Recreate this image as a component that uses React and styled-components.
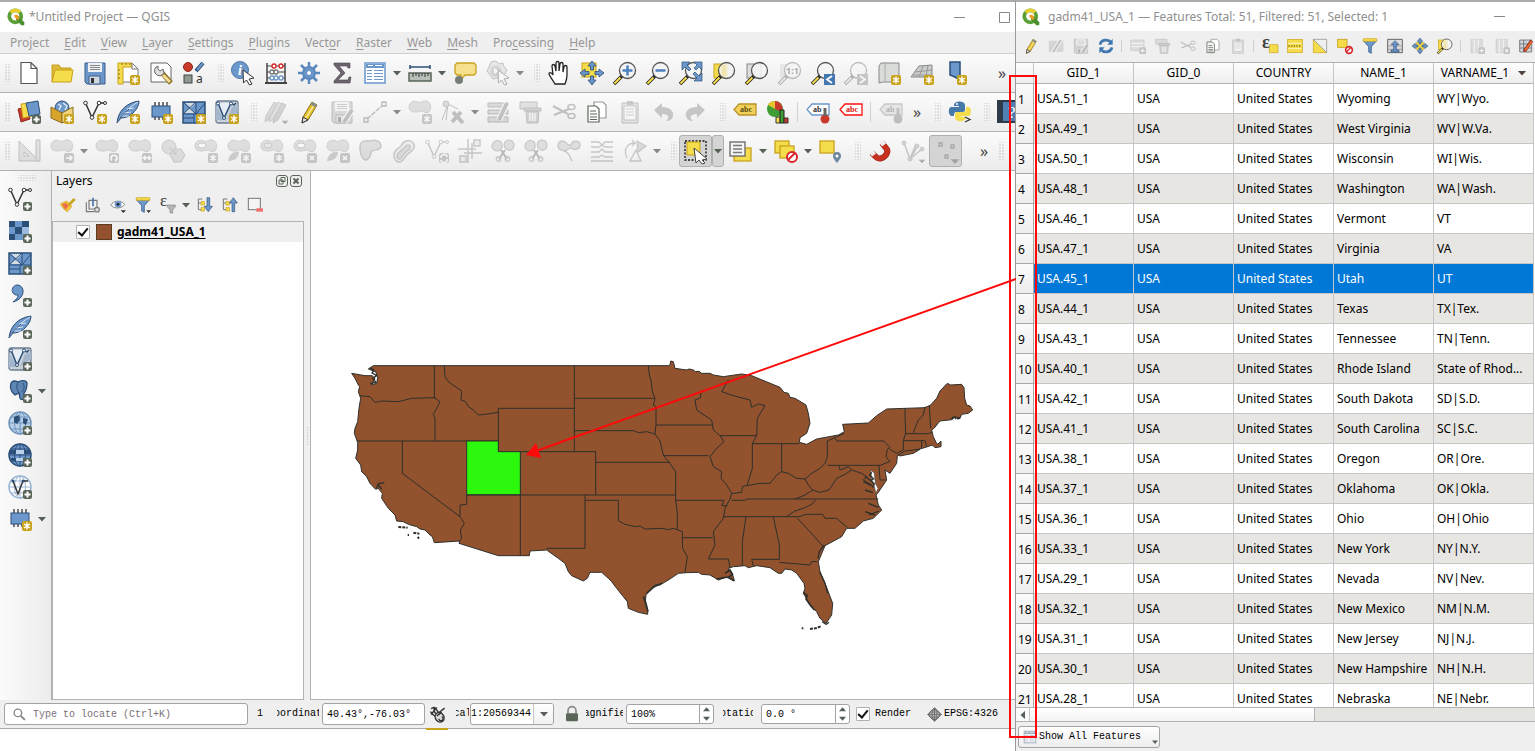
import React, { useState } from "react";
import styled, { createGlobalStyle } from "styled-components";

const GlobalStyle = createGlobalStyle`
  * { box-sizing: border-box; }
  body {
    margin: 0;
    background: #fff;
    color: #000;
    font-family: "Noto Sans", "Open Sans", sans-serif;
    font-size: 12px;
    line-height: 16px;
  }
  button, input, select {
    font: inherit;
    color: inherit;
    margin: 0;
    padding: 0;
    border: 0;
    background: none;
    outline: none;
  }
`;

const Desktop = styled.div`
  display: grid;
  grid-template-columns: minmax(0, 1015fr) minmax(0, 520fr);
  height: 100vh;
  overflow: hidden;
`;

const MainWindow = styled.main`
  display: flex;
  flex-direction: column;
  min-width: 0;
  min-height: 0;
  padding-bottom: 22px;
  border-top: 2px solid #a9aeab;
`;

const TitleBar = styled.header`
  display: flex;
  align-items: center;
  flex: none;
  height: ${(p) => (p.$small ? 29 : 30)}px;
  padding: 0 0 0 ${(p) => (p.$small ? 6 : 7)}px;
  background: #fff;
  color: #8f8f8f;
  font-size: 12px;
  white-space: nowrap;
  h1 {
    flex: 1;
    margin: 0 0 0 4px;
    overflow: hidden;
    font-size: 12px;
    font-weight: 400;
  }
  h2 {
    flex: 1;
    margin: 0 0 0 8px;
    overflow: hidden;
    font-size: 12px;
    font-weight: 400;
  }
`;

const WindowBtn = styled.button`
  display: grid;
  place-items: center;
  flex: none;
  width: ${(p) => p.$w}px;
  height: 28px;
  svg { display: block; }
`;

const MenuBar = styled.nav`
  display: flex;
  align-items: center;
  flex: none;
  gap: 15px;
  height: 22px;
  padding: 0 10px;
  border-bottom: 1px solid #cfcfcf;
  background: #efefef;
  a {
    color: #979797;
    text-decoration: none;
  }
  u { text-underline-offset: 2px; }
`;

const ToolRow = styled.div`
  display: flex;
  align-items: center;
  flex: none;
  height: 39px;
  overflow: hidden;
  border-bottom: 1px solid #b2b2b2;
  background: linear-gradient(#fbfbfb, #ececec);
`;

const Grip = styled.span`
  flex: none;
  width: ${(p) => p.$w || 16}px;
  height: 18px;
  padding: 0 ${(p) => (p.$w === 12 ? "2px 0 4px" : "2px 0 8px")};
  background: radial-gradient(circle, #989898 1px, transparent 1px) center / 3px 3px;
  background-clip: content-box;
`;

const SideGrip = styled.span`
  align-self: flex-start;
  width: 18px;
  height: 6px;
  margin: 4px 0 2px 18px;
  background: radial-gradient(circle, #989898 1px, transparent 1px) center / 3px 3px;
`;

const ToolBtn = styled.button`
  display: grid;
  place-items: center;
  flex: none;
  width: ${(p) => p.$w || 33}px;
  height: ${(p) => (p.$w ? 24 : 32)}px;
  border: 1px solid ${(p) => (p.$pressed ? "#aeb1ae" : "transparent")};
  border-radius: 3px;
  background: ${(p) => (p.$pressed ? "#d3d4d3" : "none")};
  svg { display: block; }
  &:disabled svg { filter: grayscale(1); opacity: 0.36; }
`;

const ArrowBtn = styled(ToolBtn)`
  width: 12px;
  &:disabled svg { opacity: 0.7; }
`;

const Rule = styled.span`
  flex: none;
  width: 1px;
  height: ${(p) => p.$h || 20}px;
  margin: 0 3px;
  background: #cfcfcf;
`;

const More = styled.button`
  flex: none;
  width: 20px;
  margin-left: ${(p) => (p.$push ? "auto" : p.$gap ? "12px" : "0")};
  margin-right: ${(p) => (p.$push ? "3px" : "0")};
  color: #444;
  font-size: 16px;
  line-height: 20px;
`;

const Workspace = styled.div`
  display: flex;
  flex: 1;
  min-height: 0;
  background: #efefef;
`;

const SideBar = styled.div`
  display: flex;
  flex-direction: column;
  flex: none;
  width: 51px;
  background: linear-gradient(90deg, #fbfbfb, #ececec);
`;

const SideItem = styled.div`
  display: flex;
  align-items: center;
  flex: none;
  height: 32px;
  padding-left: 3px;
`;

const LayersPanel = styled.section`
  display: flex;
  flex-direction: column;
  flex: none;
  width: 253px;
  border-left: 1px solid #b2b2b2;
`;

const PanelHead = styled.div`
  display: flex;
  align-items: center;
  gap: 2px;
  height: 20px;
  padding: 0 2px 0 4px;
  h2 {
    flex: 1;
    margin: 0;
    font-size: 12px;
    font-weight: 400;
  }
`;

const PanelBtn = styled.button`
  width: 12px;
  height: 12px;
  svg { display: block; }
`;

const PanelTools = styled.div`
  display: flex;
  align-items: center;
  height: 30px;
  padding: 0 0 2px 3px;
`;

const LayerTree = styled.ul`
  flex: 1;
  margin: 0;
  padding: 0;
  list-style: none;
  border: 1px solid #b2b2b2;
  background: #fff;
`;

const LayerRow = styled.li`
  display: flex;
  align-items: center;
  height: 20px;
  padding-left: 23px;
  background: #efefef;
  label {
    font-weight: 700;
    text-decoration: underline;
    text-underline-offset: 2px;
  }
`;

const Swatch = styled.span`
  width: 16px;
  height: 16px;
  margin: 0 5px 0 6px;
  border: 1px solid #5d3a24;
  background: #91522d;
`;

const Check = styled.input`
  appearance: none;
  display: grid;
  place-items: center;
  flex: none;
  width: 14px;
  height: 14px;
  border: 1px solid #b0b0b0;
  border-radius: 1px;
  background: #fff;
  &:checked::before {
    content: "";
    width: 4px;
    height: 8px;
    margin-bottom: 2px;
    border: solid #111;
    border-width: 0 2px 2px 0;
    transform: rotate(40deg);
  }
`;

const Splitter = styled.span`
  display: grid;
  place-items: center;
  flex: none;
  width: 6px;
  &::before {
    content: "";
    width: 3px;
    height: 18px;
    background: radial-gradient(circle, #b3b3b3 1px, transparent 1px) center / 3px 3px;
  }
`;

const Canvas = styled.div`
  flex: 1;
  min-width: 0;
  border: solid #b2b2b2;
  border-width: 0 0 1px 1px;
  background: #fff;
  svg {
    display: block;
    width: 100%;
    height: 100%;
  }
`;

const StatusBar = styled.footer`
  display: flex;
  align-items: center;
  flex: none;
  height: 29px;
  padding: 0 4px;
  border-bottom: 1px solid #a9a9a9;
  background: #efefef;
  font-family: "Liberation Mono", monospace;
  font-size: 10px;
  white-space: nowrap;
`;

const Field = styled.span`
  display: flex;
  align-items: center;
  flex: none;
  width: ${(p) => p.$w}px;
  height: ${(p) => (p.$short ? 20 : 22)}px;
  border: 1px solid #a3a3a3;
  border-radius: 3px;
  background: #fff;
  overflow: hidden;
  input, select {
    flex: 1;
    min-width: 0;
    height: 100%;
    padding-left: ${(p) => (p.$tight ? 0 : 4)}px;
    appearance: none;
  }
  input::placeholder { color: #7b7078; opacity: 1; }
`;

const LocatorIcon = styled.span`
  display: grid;
  margin: 0 3px 0 8px;
`;

const Clipped = styled.label`
  display: flex;
  justify-content: center;
  flex: none;
  width: ${(p) => p.$w}px;
  margin: 0 ${(p) => p.$right}px 0 ${(p) => p.$left}px;
  overflow: hidden;
`;

const Count = styled.span`
  width: 20px;
  margin-left: 9px;
`;

const DropMark = styled.span`
  display: grid;
  place-items: center;
  width: 20px;
  height: 100%;
  border-left: 1px solid #c4c4c4;
  background: linear-gradient(#fff, #f0f0f0);
`;

const Spin = styled.span`
  display: grid;
  width: 14px;
  height: 100%;
  border-left: 1px solid #a3a3a3;
  button {
    display: grid;
    place-items: center;
  }
`;

const MouseBtn = styled.button`
  display: grid;
  place-items: center;
  flex: none;
  align-self: stretch;
  width: 22px;
  margin: 0 8px 0 1px;
  box-shadow: 0 2px 0 #c9a21c;
`;

const StatusIcon = styled.span`
  display: grid;
  flex: none;
  margin-left: ${(p) => p.$left}px;
`;

const RenderLabel = styled.label`
  display: flex;
  align-items: center;
  flex: none;
  gap: 5px;
  margin-left: 6px;
`;

const Crs = styled.span`
  margin-left: 2px;
`;

const AttributeWindow = styled.aside`
  position: relative;
  display: flex;
  flex-direction: column;
  min-width: 0;
  min-height: 0;
  border-top: 2px solid #a9aeab;
  border-left: 1px solid #999;
  background: #efefef;
`;

const AttributeTools = styled.div`
  display: flex;
  align-items: center;
  flex: none;
  height: 31px;
  padding: 0 0 2px 2px;
  overflow: hidden;
`;

const TableArea = styled.div`
  flex: 1;
  min-height: 0;
  padding-right: 1px;
  overflow: hidden;
  border-top: 1px solid #b2b2b2;
  background: #fff;
`;

const Table = styled.table`
  width: 100%;
  table-layout: fixed;
  border-collapse: separate;
  border-spacing: 0;
  th, td {
    overflow: hidden;
    border: solid #c6c6c6;
    border-width: 0 1px 1px 0;
    white-space: nowrap;
    text-overflow: ellipsis;
  }
  td {
    height: 30px;
    padding: 0 4px 0 3px;
  }
  tr:nth-child(even) td { background: #e7e6e3; }
`;

const HeadCell = styled.th`
  height: 21px;
  padding: 0;
  background: linear-gradient(#fdfdfd, #eeeeee);
  font-weight: 400;
  && { border-bottom-color: #b2b2b2; }
  &:first-child { width: 18px; }
`;

const SortLabel = styled.span`
  display: flex;
  align-items: center;
  justify-content: center;
  gap: 9px;
`;

const RowNumber = styled.th`
  padding: 2px 0 0;
  background: linear-gradient(#fbfbfb, #ededed);
  font-weight: 400;
  text-align: left;
  && {
    padding-left: 2px;
    text-overflow: clip;
    border-right-color: #a9a9a9;
    border-bottom-color: #a9a9a9;
  }
`;

const Row = styled.tr`
  && td {
    ${(p) => p.$selected && "background: #0078d7; color: #fff;"}
  }
`;

const ScrollBar = styled.div`
  display: flex;
  flex: none;
  height: 15px;
  border: solid #b2b2b2;
  border-width: 1px 0;
  background: #e4e4e1;
  button {
    display: grid;
    place-items: center;
    width: 14px;
    border-right: 1px solid #c6c6c6;
    background: #fafafa;
  }
`;

const Thumb = styled.span`
  flex: 0 0 55%;
  border-right: 1px solid #b2b2b2;
  background: linear-gradient(#fff, #f3f3f3);
`;

const FilterBar = styled.div`
  display: flex;
  align-items: center;
  flex: none;
  height: 29px;
  padding-left: 2px;
`;

const FilterBtn = styled.button`
  display: flex;
  align-items: center;
  gap: 2px;
  height: 22px;
  padding: 0 1px 0 4px;
  border: 1px solid #a3a3a3;
  border-radius: 3px;
  background: linear-gradient(#fff, #ededed);
  font-family: "Liberation Mono", monospace;
  font-size: 10px;
  > svg:first-child { filter: grayscale(0.6); opacity: 0.8; }
  > svg:last-child {
    align-self: flex-end;
    margin: 0 0 2px 9px;
  }
`;

const Highlight = styled.span`
  position: absolute;
  top: 73px;
  bottom: 13px;
  left: -7px;
  width: 28px;
  border: 2px solid #ff0a0a;
  pointer-events: none;
`;

const Pointer = styled.svg`
  position: absolute;
  top: 268px;
  right: 100%;
  width: 494px;
  height: 194px;
  pointer-events: none;
`;

/* ---------- icons ---------- */

const B = "#6b97cb";
const N = "#2c4f78";
const Y = "#f5dc4a";
const G = "#c9a21c";
const K = "#5a6658";

const Plus = () => (
  <g>
    <rect x="15" y="15" width="9" height="9" rx="2" fill={K} />
    <path d="M19.500 16.500v6M16.500 19.500h6" stroke="#fff" strokeWidth="2" />
  </g>
);
const Star = ({ c = G }) => (
  <g>
    <rect x="14" y="14" width="10" height="10" rx="2" fill={c} />
    <path d="M19 15.500v7M16 17l6 4M22 17l-6 4" stroke="#fff" strokeWidth="1.500" />
  </g>
);
const Mark = ({ d }) => (
  <g>
    <rect x="14" y="14" width="10" height="10" rx="2" fill="#777" />
    <path d={d} stroke="#fff" strokeWidth="1.700" fill="none" />
  </g>
);
const Blob = ({ f = "#b0b6b0" }) => (
  <path
    d="M1 7c0-5 5-7 9-5 2 1 3 0 6-1 5-1 8 4 6 9-1 3-3 3-6 2-2-2-4 0-8 0S1 11 1 7z"
    fill={f}
    stroke="#888"
  />
);
const Ring = () => (
  <g>
    <Blob />
    <ellipse cx="8" cy="6.500" rx="4" ry="2.500" fill="#fff" stroke="#777" />
  </g>
);
const Corner = () => <path d="M18 21h6l-3 3z" fill="#222" />;
const Lens = ({ children }) => (
  <g>
    <path d="M1 23l8-8" stroke="#222" strokeWidth="3.500" />
    <path d="M1.500 22.500l6-6" stroke={Y} strokeWidth="2" />
    <circle cx="14.500" cy="9.500" r="8" fill="#f4f4f4" fillOpacity=".9" stroke="#555" strokeWidth="1.300" />
    {children}
  </g>
);
const Nodes = ({ c = "#333" }) => (
  <g fill="none" stroke={c} strokeWidth="1.500">
    <path d="M2.500 3L9 17.500 16 3h6" />
    <g fill="#fff" strokeWidth="1">
      <circle cx="2.500" cy="3" r="1.800" />
      <circle cx="9" cy="17.500" r="1.800" />
      <circle cx="16" cy="3" r="1.800" />
      <circle cx="22" cy="3" r="1.500" />
    </g>
  </g>
);
const Feather = () => (
  <g>
    <path d="M1 23C2 12 9 3 23 1c0 5-3 9-6 12-4 4-9 5-12 5z" fill={B} stroke={N} />
    <path d="M1 23C6 14 12 8 22 2M8 13l7-1M11 9l7-1M6 16l7 0" stroke="#dce7f3" fill="none" />
    <path d="M1 23C5 16 9 12 13 9" stroke={N} fill="none" />
  </g>
);
const Chip = () => (
  <g>
    <path d="M6 2v18M10 2v18M14 2v18M18 2v18" stroke="#333" strokeWidth="1.300" />
    <rect x="3" y="6" width="18" height="11" fill={B} stroke={N} />
  </g>
);
const Mesh = () => (
  <g>
    <path d="M1 2h22v21H1z" fill={B} stroke={N} strokeWidth="1.500" />
    <path d="M3 3h11l-5 5zM3 12l5-4 5 5H2z" fill="#d5dce4" />
    <path d="M1 14h22M12 14v9M14 2v12M1 2l13 12M14 2L1 14M23 3L14 14M1 18h11" stroke={N} fill="none" />
  </g>
);
const Mesh2 = () => (
  <g>
    <rect x="1" y="1" width="22" height="22" rx="2" fill="#c9d0d8" stroke="#6e7f92" strokeWidth="1.300" />
    <path d="M3 3l6 15 7-15z" fill="#e6edf5" />
    <path d="M1 5l8 15H1zM23 5l-6 2-5 13 11-8z" fill="#a3b6cc" />
    <path d="M3 3l6 15 7-15 3 2 2-2" fill="none" stroke={N} strokeWidth="1.500" />
    <circle cx="3" cy="3.500" r="1.500" fill="#fff" stroke={N} />
    <circle cx="16" cy="3.500" r="1.500" fill="#fff" stroke={N} />
    <circle cx="9" cy="18" r="1.500" fill="#fff" stroke={N} />
  </g>
);
const Globe = ({ f = B, s = N }) => (
  <g fill="none" stroke={s}>
    <circle cx="12" cy="12" r="11" fill={f} strokeWidth="1.500" />
    <path d="M1 12h22M3 6h18M3 18h18M12 1v22" />
    <ellipse cx="12" cy="12" rx="5.500" ry="11" />
  </g>
);
const Pencil = ({ c = "#e9c231" }) => (
  <g>
    <path d="M6 17L15 2l5 3-9 15-6 3z" fill={c} stroke="#8d6e1c" />
    <path d="M9 18l8-13" stroke="#fff3b0" strokeWidth="1.200" />
    <path d="M15 2l5 3-1.500 2.500-5-3z" fill="#8a8f8a" />
    <path d="M6 17l5 3-6 3z" fill="#ddd" stroke="#333" />
  </g>
);
const Tag = ({ f = "#f1d15a", s = "#b8932a", t = "#5a4a10", txt = "abc" }) => (
  <g>
    <path d="M6 4h17v11H6L1 9.500z" fill={f} stroke={s} strokeWidth="1.300" />
    <text x="7" y="12" fontSize="8" fontWeight="700" fontFamily="Liberation Serif, serif" fill={t}>
      {txt}
    </text>
  </g>
);
const Floppy = ({ c = B }) => (
  <g>
    <path d="M2 2h20v21H4l-2-2z" fill={c} stroke="#3b5f8c" />
    <path d="M5 2h14v9H5z" fill="#eef1f4" />
    <path d="M7 4.500h10M7 6.500h10M7 8.500h10" stroke="#888" />
    <path d="M6 15h11v8H6z" fill="#cfd6de" stroke="#3b5f8c" />
    <path d="M8 17h3v5H8z" fill="#333" />
  </g>
);
const Scissors = () => (
  <g fill="none" stroke="#666" strokeWidth="1.500">
    <path d="M1 6l15 8M2 15l15-6" strokeWidth="2" />
    <ellipse cx="19.500" cy="7" rx="3.500" ry="2.500" />
    <ellipse cx="19.500" cy="16" rx="3.500" ry="2.500" />
  </g>
);
const SplitBlob = () => (
  <g stroke="#777" strokeWidth="1.200">
    <path d="M2 4c3-4 8-3 9 1 1 4-2 7-5 7S-1 8 2 4zM14 3c4-4 9-1 9 3s-3 6-6 5-5-5-3-8z" fill="#b0b6b0" />
    <path d="M8 20l6-9M16 20l-6-9" stroke="#555" strokeWidth="2" />
    <circle cx="7.500" cy="20" r="2.300" fill="none" />
    <circle cx="16.500" cy="20" r="2.300" fill="none" />
  </g>
);
const Trash = () => (
  <g>
    <path d="M1 2h17v7H1z" fill="#bbb" stroke="#666" />
    <path d="M5 8h17v3H5zM7 11h13l-1 12H8z" fill="#999" stroke="#666" />
    <path d="M11 13v8M13.500 13v8M16 13v8" stroke="#fff" strokeWidth="1.300" />
  </g>
);
const Table2 = () => (
  <g>
    <rect x="2" y="2" width="20" height="20" fill="#fff" stroke={B} strokeWidth="1.500" />
    <path d="M3 3h18v4H3z" fill={B} />
    <path d="M5 4.500h5M12 4.500h7" stroke="#fff" />
    <path d="M4 9.500h5M11 9.500h9M4 12.500h5M11 12.500h9M4 15.500h5M11 15.500h9M4 18.500h5M11 18.500h9" stroke={B} />
  </g>
);
const Cursor = () => <path d="M12 9l11 8-5 1 3 5-2.500 1-3-5-3 3z" fill="#fff" stroke="#333" />;
const Sheets = () => (
  <g fill="#fff" stroke={K} strokeWidth="1.200">
    <path d="M9 2h9l3 3v13H9z" stroke="#999" />
    <path d="M3 6h8l3 3v13H3z" />
    <path d="M5 11h6M5 14h7M5 17h7M5 19.500h7" />
  </g>
);
const Cross4 = () => (
  <g>
    <path d="M12 0l4 5h-2.500v4h-3V5H8zM12 24l4-5h-2.500v-4h-3v4H8zM0 12l5-4v2.500h4v3H5V16zM24 12l-5-4v2.500h-4v3h4V16z" fill={B} stroke={N} strokeWidth=".8" />
  </g>
);
const Funnel = () => (
  <g>
    <path d="M2 4h20l-8 9v10l-4-2v-8z" fill={B} stroke={N} />
    <path d="M2 1h20v4H2z" fill={Y} stroke={G} />
  </g>
);
const Arrow3 = ({ up }) => (
  <g>
    <path d="M2 3v16h6M2 9h6M2 3h6" stroke="#777" strokeWidth="1.500" fill="none" />
    <rect x="6" y="7" width="5" height="5" fill={Y} stroke={G} />
    <rect x="6" y="16" width="5" height="5" fill={Y} stroke={G} />
    <path d={up ? "M17 1l6 8h-4v13h-4V9h-4z" : "M17 22l6-8h-4V1h-4v13h-4z"} fill={B} stroke={N} />
  </g>
);
const Pair = ({ x, y }) => <rect x={x} y={y} width="14" height="12" fill={Y} stroke={G} strokeWidth="1.300" />;

const glyphs = {
  logo: (
    <g>
      <circle cx="11" cy="11" r="8" fill="none" stroke="#5a9e36" strokeWidth="5" />
      <path d="M5 6a8 8 0 0 1 12 0" fill="none" stroke="#e8cf2f" strokeWidth="5" />
      <path d="M12 11l4 0 7 8v4h-4l-7-8z" fill="#4a8f2e" />
      <path d="M10 9h4l3 5-3 2-4-4z" fill="#ee9b22" />
    </g>
  ),
  newdoc: <path d="M4 1.500h10l6 6v15H4zM14 1.500v6h6" fill="#fff" stroke="#555" strokeWidth="1.200" />,
  open: (
    <g stroke={G}>
      <path d="M2 21V4h7l2 3h10v4" fill="#dcb73a" />
      <path d="M2 21L5 9h18l-2 12z" fill={Y} />
    </g>
  ),
  save: <Floppy />,
  layout: (
    <g>
      <path d="M3 3h14l5 5v13H3z" fill="#fff" stroke="#777" />
      <path d="M2 2h14v4H7v17H2z" fill={Y} stroke={G} />
      <path d="M6 2v2M10 2v2M14 2v2M2 9h2M2 13h2M2 17h2" stroke="#8d6e1c" />
      <path d="M16 2l6 6h-6z" fill="#fff" stroke="#777" />
      <Star />
    </g>
  ),
  manager: (
    <g>
      <path d="M2 2h16l4 4v15H2z" fill="#fff" stroke="#666" />
      <path d="M13 12l9 10" stroke="#8d6e1c" strokeWidth="5" />
      <path d="M14 14l7 7" stroke="#f0dd96" strokeWidth="3" />
      <path d="M9 5a5 5 0 1 0 6 7l-1-4-3 2-2-2z" fill="#ddd" stroke="#666" />
    </g>
  ),
  style: (
    <g>
      <circle cx="6" cy="6" r="4.500" fill="#c93a2b" stroke="#8a2a1e" />
      <path d="M14 10l7-8" stroke={N} strokeWidth="4" />
      <path d="M15 9l6-7" stroke={B} strokeWidth="2" />
      <rect x="2" y="14" width="8" height="8" fill="#8e9a92" stroke="#444" />
      <text x="14" y="22" fontSize="12" fill="#333">a</text>
    </g>
  ),
  identify: (
    <g>
      <circle cx="9" cy="9" r="8.500" fill={B} stroke="#4b77aa" />
      <text x="7" y="14" fontSize="14" fontWeight="700" fontStyle="italic" fontFamily="Liberation Serif, serif" fill="#fff">i</text>
      <Cursor />
    </g>
  ),
  abacus: (
    <g fill="none" stroke="#444" strokeWidth="1.500">
      <path d="M3 2v20M21 2v20" />
      <path d="M3 5h18M3 11h18M3 17h18" strokeWidth="1" />
      <path d="M1 22h22" strokeWidth="2" />
      <g fill="#fff" strokeWidth="1.300">
        <g stroke="#d22"><circle cx="10" cy="5" r="2" /><circle cx="17" cy="5" r="2" /></g>
        <g stroke="#777"><circle cx="8" cy="11" r="2" /><circle cx="12" cy="11" r="2" /></g>
        <g stroke={B}><circle cx="8" cy="17" r="2" /><circle cx="12" cy="17" r="2" /><circle cx="17" cy="17" r="2" /></g>
      </g>
    </g>
  ),
  gear: (
    <g fill="none" stroke="#5a88bd">
      <path d="M12 1v22M1 12h22M4 4l16 16M20 4L4 20" strokeWidth="2.500" />
      <circle cx="12" cy="12" r="6" fill={B} strokeWidth="2" />
      <circle cx="12" cy="12" r="2.500" fill="#fff" />
    </g>
  ),
  sigma: <path d="M4 2h16v5h-2l-1-2H9l6 7-7 7h10l1-3h2l-1 6H4v-2l7-8-7-8z" fill="#6d6470" stroke="#4c444e" strokeWidth=".6" />,
  table: <Table2 />,
  measure: (
    <g>
      <path d="M2 6h20M2 4v4M22 4v4" stroke={N} strokeWidth="1.500" />
      <path d="M1 12h22v8H1z" fill="#b9c0b9" stroke={K} strokeWidth="1.500" />
      <path d="M5 12v4M8 12v3M11 12v4M14 12v3M17 12v4M20 12v3" stroke="#333" />
    </g>
  ),
  tip: (
    <g>
      <path d="M4 2h17l2 2v8l-2 2H12l-5 6 1-6H4l-2-2V4z" fill="#f6e08e" stroke={G} strokeWidth="1.300" />
      <circle cx="6" cy="19" r="4" fill="#777c77" />
    </g>
  ),
  action: (
    <g>
      <path d="M10 0l3 3 4-1 1 4 3 3-2 4-3 4-5 0-4 1-3-4-3-4 2-4 2-5z" fill="#ccc" stroke="#666" />
      <circle cx="10" cy="10" r="5.500" fill="#999" />
      <path d="M8 7l5 3-5 3z" fill="#fff" />
      <Cursor />
    </g>
  ),
  hand: (
    <path d="M8 23c-2-4-5-7-6-10 0-2 2-2 4 1L5 5c0-2 2.500-2 3 0l1 5V2c0-2 3-2 3 0v8l1-7c0-2 3-2 3 0v8l1-5c0-2 3-2 3 0v8c0 4-1 6-2 9z" fill="#fff" stroke="#222" strokeWidth="1.300" />
  ),
  panSel: (
    <g>
      <rect x="2" y="2" width="14" height="14" fill={Y} stroke={G} />
      <Cross4 />
    </g>
  ),
  panTo: (
    <g>
      <rect x="7" y="7" width="10" height="10" fill={Y} stroke={G} />
      <Cross4 />
    </g>
  ),
  zoomIn: <Lens><path d="M14.500 4.500v10M9.500 9.500h10" stroke="#4b7fbd" strokeWidth="2.500" /></Lens>,
  zoomOut: <Lens><path d="M9.500 9.500h10" stroke="#4b7fbd" strokeWidth="2.500" /></Lens>,
  zoomFull: (
    <g>
      <Lens />
      <path d="M3 1h8l-3 3 4 4-2 2-4-4-3 3zM23 1h-8l3 3-3 3 2 2 3-3 3 3zM23 20h-8l3-3-4-4 2-2 4 4 3-3z" fill={B} stroke={N} strokeWidth=".7" />
    </g>
  ),
  zoomSel: <g><rect x="2" y="3" width="14" height="14" fill={Y} stroke={G} /><Lens><path d="M12 4v11" stroke="#ecd87a" strokeWidth="5" opacity=".5" /></Lens></g>,
  zoomLayer: <g><rect x="2" y="3" width="14" height="14" fill="#ddd" stroke="#888" /><Lens /></g>,
  zoomNative: <g><rect x="2" y="3" width="14" height="14" fill="#ccc" /><Lens><text x="8" y="13" fontSize="9" fontWeight="700" fill="#222">1:1</text></Lens></g>,
  zoomLast: <g><Lens /><path d="M13 13h11v11H13z" fill="#4377b1" /><path d="M21 15l-5 3.500 5 3.500" stroke="#fff" strokeWidth="1.800" fill="none" /></g>,
  zoomNext: <g><Lens /><path d="M13 13h11v11H13z" fill="#777" /><path d="M16 15l5 3.500-5 3.500" stroke="#fff" strokeWidth="1.800" fill="none" /></g>,
  mapView: <g><path d="M4 2h18v19H6L2 22V5z" fill="#d9dcd9" stroke="#888" /><path d="M8 2v18" stroke="#aaa" /><Star /></g>,
  map3d: <g><path d="M1 16L9 5l13-1v12z" fill="#c9cdc9" stroke="#888" /><path d="M5 11l17-2M13 5l-4 11M18 4l-2 12M3 14h19" stroke="#999" /><Star /></g>,
  bookmark: <g><path d="M7 1h10v18l-5-3-5-2z" fill={B} stroke={N} strokeWidth="1.500" /><Star /></g>,

  source: (
    <g>
      <path d="M1 9l9-2 3 12-9 3z" fill="#c93a2b" stroke="#912a1f" />
      <path d="M4 4l10-1 1 13-9 2z" fill={Y} stroke={G} />
      <path d="M9 3l12-2 2 13-11 2z" fill={B} stroke={N} />
      <Plus />
    </g>
  ),
  geopackage: (
    <g>
      <circle cx="12" cy="8" r="7" fill={B} stroke={N} />
      <path d="M8 4l3 2-2 4M13 3l4 3-2 4" stroke="#dce7f3" fill="none" strokeWidth="1.500" />
      <path d="M1 7l11 6v10L1 18z" fill="#d7a52c" stroke="#8d6e1c" />
      <path d="M12 13l11-6v11l-11 5z" fill="#f0d37b" stroke="#8d6e1c" />
      <Star />
    </g>
  ),
  newVector: <g><Nodes /><Star /></g>,
  newFeather: <g><Feather /><Star /></g>,
  newChip: <g><Chip /><Star /></g>,
  newMesh: <g><Mesh /><Star /></g>,
  newMesh2: <g><Mesh2 /><Star /></g>,
  addVector: <g><Nodes /><Plus /></g>,
  addRaster: (
    <g>
      <path d="M1 2h20v19H1z" fill={B} />
      <path d="M1 2h6v6H1zM14 2h7v6h-7zM7 8h7v7H7zM1 15h6v6H1z" fill={N} />
      <path d="M14 8h7v7h-7z" fill="#9dbbe0" />
      <Plus />
    </g>
  ),
  addMesh: <g><Mesh /><Plus /></g>,
  addComma: <g><path d="M9 2c6 0 8 7 4 12-2 3-5 4-8 5 4-3 5-5 5-7-7 1-8-9-1-10z" fill={B} stroke={N} /><Plus /></g>,
  addFeather: <g><Feather /><Plus /></g>,
  addMesh2: <g><Mesh2 /><Plus /></g>,
  postgis: (
    <g>
      <path d="M3 4c2-3 5-2 7-1 3-2 8-2 9 1 0 4-1 8-3 10v5c0 2-4 2-4 0l-1-5-4 2C3 13 2 8 3 4z" fill="#5d86b5" stroke={N} strokeWidth="1.300" />
      <path d="M10 3c-2 4-1 8 1 11M15 4c2 4 1 7-1 9" stroke={N} fill="none" />
      <Plus />
    </g>
  ),
  wms: <g><Globe f="#b8cfe8" s="#6f93ba" /><path d="M6 6l5-2 1 5-3 4-3-2zM15 7l5 1-2 6-3-2z" fill={N} /><Plus /></g>,
  wcs: <g><Globe /><path d="M2 7h20v4H2zM3 15h18v3H3z" fill={N} /><path d="M8 7h8v4H8zM8 15h7v3H8z" fill="#bcd2ea" /><Plus /></g>,
  wfs: <g><Globe f="#fff" s="#9ab5d4" /><path d="M5 6l5 13 5-13h5" stroke="#333" strokeWidth="1.500" fill="none" /><circle cx="5" cy="6" r="1.500" fill={N} /><circle cx="15" cy="6" r="1.500" fill={N} /><Plus /></g>,

  edits: (
    <g stroke="#777">
      <path d="M2 16L10 2l3 2-8 15-4 3z" fill="#aaa" />
      <path d="M6 17l8-15 4 2-8 15-5 3z" fill="#bbb" />
      <path d="M10 18l8-15 4 2-8 15-5 3z" fill="#999" />
      <Corner />
    </g>
  ),
  pencil: <Pencil />,
  saveEdits: <g><Floppy c="#aaa" /><path d="M14 22l8-12" stroke="#fff" strokeWidth="6" /><path d="M14 22l8-12" stroke="#666" strokeWidth="4" /></g>,
  line: <g stroke="#555" strokeWidth="1.300"><path d="M4 19L20 5" strokeDasharray="5 1" /><path d="M1 18h4v4H1zM19 2h4v4h-4z" fill="#eee" /></g>,
  addPoly: <g><Blob /><Star c="#777" /></g>,
  vertex: <g stroke="#666" fill="none"><path d="M4 3l4 3M7 4L1 20M7 4l-2 16M7 4l10 5" /><circle cx="5" cy="4" r="3" fill="#aaa" /><path d="M11 22l9-10M12 12l10 11" strokeWidth="4" /></g>,
  modify: <g><path d="M2 3h20v4H2zM2 10h20v4H2zM2 17h20v5H2z" fill="#aaa" stroke="#555" /><path d="M13 20l8-17" stroke="#fff" strokeWidth="6" /><path d="M13 20l8-17" stroke="#666" strokeWidth="4" /></g>,
  trash: <Trash />,
  cut: <Scissors />,
  copy: <Sheets />,
  paste: <g><path d="M4 3h16v20H4z" fill="#ccc" stroke="#666" /><path d="M6 6h12v14H6z" fill="#fff" stroke="#777" /><path d="M9 1h6v4H9z" fill="#777" /><path d="M8 9h8M8 12h8M8 15h8" stroke="#888" /></g>,
  undo: <path d="M3 10l8-7v4c8 0 12 4 11 9-1 4-4 5-7 5 4-3 3-7-4-7v4z" fill="#777" />,
  redo: <path d="M21 10l-8-7v4C5 7 1 11 2 16c1 4 4 5 7 5-4-3-3-7 4-7v4z" fill="#777" />,
  label: <Tag />,
  diagram: (
    <g>
      <circle cx="9" cy="9" r="8" fill="#3f9c35" />
      <path d="M9 9V1a8 8 0 0 1 7 11z" fill="#c93a2b" />
      <path d="M9 9L2 5a8 8 0 0 1 7-4z" fill="#e9c231" />
      <path d="M10 17h4v6h-4z" fill={Y} stroke="#333" /><path d="M14 10h4v13h-4z" fill="#3f9c35" stroke="#222" /><path d="M18 18h4v5h-4z" fill="#c93a2b" stroke="#333" />
    </g>
  ),
  labelPin: <g><Tag f="#fff" s={B} t="#333" txt="ab" /><circle cx="19" cy="19" r="4.500" fill="#c93a2b" /><path d="M19 8v8" stroke="#666" strokeWidth="3" /></g>,
  labelRed: <Tag f="#fff" s="#f11" t="#d11" />,
  labelGrey: <g><Tag f="#ccc" s="#777" t="#333" txt="ab" /><circle cx="19" cy="19" r="4.500" fill="#666" /><path d="M19 8v8" stroke="#666" strokeWidth="3" /></g>,
  python: (
    <g>
      <path d="M6 5c0-4 10-5 11 0v5c0 2-2 2-4 2H9c-3 0-3 2-3 4H3c-3-2-3-8 0-9h8V6H6z" fill="#4779a8" />
      <path d="M18 7h3c3 2 2 8 0 9h-8v1h5c0 5-10 6-11 1v-4c0-2 2-2 4-2h4c3 0 3-2 3-5z" fill={Y} />
      <circle cx="9" cy="4" r="1" fill="#fff" />
      <path d="M17 17l5 2.500-5 2.500" stroke="#333" fill="none" strokeWidth="1.300" />
    </g>
  ),
  help: (
    <g>
      <rect x="0" y="0" width="24" height="23" fill="#2f3b48" />
      <rect x="6" y="2" width="18" height="19" fill="#4f7fb5" />
      <text x="11" y="18" fontSize="17" fontFamily="Liberation Serif, serif" fill="#fff">?</text>
    </g>
  ),

  ruler: <g fill="#bbb" stroke="#666"><path d="M2 2l20 20H2zM7 13v4h5z" fillRule="evenodd" /><path d="M19 1h4v21h-4z" /></g>,
  blobMove: <g><Blob /><Mark d="M16 19h6M19.500 16.500l2.500 2.500-2.500 2.500" /></g>,
  blobRotate: <g><Blob /><Mark d="M17 21.500a3 3 0 1 1 4 0v-2" /></g>,
  blobScale: <g><Blob /><Mark d="M16 19h6M17.500 17l-2 2 2 2M20.500 17l2 2-2 2" /></g>,
  simplify: <g fill="#b0b6b0" stroke="#777"><circle cx="8" cy="8" r="7" /><path d="M13 10h7l4 6-4 7h-7l-4-7z" /><path d="M8 8l7 7M15 12v3h-3" fill="none" /></g>,
  addRing: <g><Ring /><Star c="#777" /></g>,
  addPart: <g><Blob /><path d="M1 22c1-6 5-10 11-9 0 5-4 9-11 9z" fill="#888" /><Star c="#777" /></g>,
  fillRing: <g><Blob /><ellipse cx="8" cy="6.500" rx="4" ry="2.500" fill="#ccc" stroke="#777" /><Star c="#777" /></g>,
  delRing: <g><Ring /><Mark d="M17 17l4 4M21 17l-4 4" /></g>,
  delPart: <g><Blob /><path d="M1 22c1-6 5-10 11-9 0 5-4 9-11 9z" fill="#888" /><Mark d="M17 17l4 4M21 17l-4 4" /></g>,
  reshape: <path d="M1 8c0-6 5-7 10-6 5-2 11 0 11 5-1 5-6 3-9 5-2 2-1 8-6 9-4 0-6-7-6-13z" fill="#b0b6b0" stroke="#777" strokeWidth="1.500" />,
  offset: <g stroke="#777" strokeWidth="1.500"><path d="M2 16c-1-4 4-6 7-9 2-5 8-7 11-4 5 4 1 9-3 11-4 2-5 9-10 9-3 0-5-3-5-7z" fill="#ddd" /><path d="M5 17c0-3 4-5 7-8 1-3 5-4 6-2 2 3-2 4-4 6-3 2-4 7-6 7s-3-1-3-3z" fill="#aaa" /></g>,
  reverse: <g><Nodes c="#777" /><Mark d="M16 19a3 3 0 0 1 6-1M22 20a3 3 0 0 1-6 1" /></g>,
  trim: <g stroke="#777" fill="none" strokeWidth="1.500"><path d="M10 0v24M14 4v16M0 10h18M6 14h18" /><path d="M16 1h6v6h-6zM2 17h6v6H2z" fill="#ddd" /></g>,
  split: <SplitBlob />,
  merge: <g fill="#b0b6b0" stroke="#777" strokeWidth="1.300"><path d="M1 5c3-5 8-3 10 1h3c1-5 9-5 9 0 0 4-5 6-9 3l-3 1C9 13 0 12 1 5z" /><path d="M7 12c6 1 5 6 8 10" fill="none" /></g>,
  attrs: <path d="M1 3h8l3 3 3-3h8M1 8h8l3-2 3 2h8M1 13h8l3-3 3 3h8M1 18h8l3-2 3 2h8M1 22h22" fill="none" stroke="#777" strokeWidth="1.300" />,
  rotate: <g fill="none" stroke="#777" strokeWidth="1.300"><path d="M4 19C0 11 4 4 12 4l-3-3M12 4L9 7M7 22l6-11 5 11z" /><path d="M14 2l9 5-8 6z" fill="#aaa" /></g>,
  select: (
    <g>
      <rect x="1" y="2" width="21" height="19" fill="none" stroke="#111" strokeWidth="1.300" strokeDasharray="2 1.500" />
      <rect x="3" y="3" width="13" height="13" fill={Y} stroke={G} />
      <path d="M10 9l13 11-5 1 3 3-3 1-3-4-3 3z" fill="#fff" stroke="#444" />
    </g>
  ),
  selectForm: <g><rect x="5" y="9" width="17" height="13" fill={Y} stroke={G} strokeWidth="1.300" /><rect x="1" y="3" width="15" height="14" fill="#f4f4f4" stroke="#666" strokeWidth="1.300" /><path d="M4 6.500h9M4 10h9M4 13.500h9" stroke="#777" strokeWidth="1.500" /></g>,
  deselect: <g><Pair x={1} y={2} /><Pair x={6} y={7} /><circle cx="18" cy="18" r="5" fill="#fff" stroke="#d9252b" strokeWidth="2" /><path d="M14 21l7-7" stroke="#d9252b" strokeWidth="2" /></g>,
  selectLoc: <g><Pair x={1} y={2} /><path d="M18 24c-3-4-4-5-4-7a4 4 0 0 1 8 0c0 2-1 3-4 7z" fill="#6e87a0" /><circle cx="18" cy="17" r="1.500" fill="#fff" /></g>,
  magnet: (
    <g fill="none" strokeWidth="5">
      <path d="M4 14l4 4c5 5 15-4 10-9l-4-5" stroke="#8a2016" strokeWidth="6" />
      <path d="M4 14l4 4c5 5 15-4 10-9l-4-5" stroke="#c9311f" strokeWidth="5" />
      <path d="M3 12l3 4M13 2l3 4" stroke="#eee" />
    </g>
  ),
  snap: <g fill="#999" stroke="#777"><path d="M3 4l6 16 7-12M9 20l12-10M9 20l6-15" fill="none" strokeWidth="1.500" /><circle cx="3" cy="4" r="2" /><circle cx="16" cy="7" r="2" /><circle cx="21" cy="10" r="2" /><circle cx="9" cy="20" r="2" /><Corner /></g>,
  dots: <g fill="none" stroke="#555" strokeWidth="1.300"><path d="M5 4h3v3H5zM17 6h3v3h-3zM11 16h3v3h-3z" /><Corner /></g>,

  dock: <g fill="none" stroke={K} strokeWidth="2"><rect x="1" y="1" width="22" height="22" rx="5" /><path d="M10 5h8v8h-8zM6 10h8v8H6z" /></g>,
  close: <g fill="none" stroke={K} strokeWidth="2"><rect x="1" y="1" width="22" height="22" rx="5" /><path d="M7 7l10 10M17 7L7 17" strokeWidth="4" /></g>,
  brush: <g><path d="M1 10l9-4 8 8-7 8c-5-3-9-7-10-12z" fill="#f3c33c" stroke={G} /><path d="M3 11l6-2 4 4-5 6z" fill="#ec6b4c" /><path d="M13 12l9-9" stroke={G} strokeWidth="4" /></g>,
  group: <g fill="none" stroke="#777" strokeWidth="1.700"><path d="M2 8v14h12M6 5v13h12V5z" /><path d="M12 1v13" stroke="#4b77aa" strokeWidth="2.500" /><circle cx="18" cy="19" r="3.500" fill="#ddd" /></g>,
  eye: <g><path d="M1 12C5 5 17 4 22 11c-4 6-15 8-21 1z" fill="#fff" stroke="#888" strokeWidth="1.500" /><circle cx="12" cy="11" r="5" fill={B} /><circle cx="12" cy="11" r="2" fill="#222" /><path d="M16 20h8l-4 4z" fill="#333" /></g>,
  filter: <g><Funnel /><path d="M17 20h7l-3.500 4z" fill="#333" /></g>,
  funnel: <Funnel />,
  epsilon: <g><text x="0" y="13" fontSize="25" fontFamily="Liberation Serif, serif" fill="#333">ε</text><path d="M10 12h13v3l-4 4v5h-4v-5l-4-4z" fill="#b5b5b5" stroke="#888" /></g>,
  expand: <Arrow3 />,
  collapse: <Arrow3 up />,
  remove: <g><rect x="2" y="2" width="18" height="17" fill="#f4f4f4" stroke="#777" strokeWidth="1.500" /><path d="M14 17h10v5H14z" fill="#f26d6d" /></g>,

  multiEdit: <g><path d="M1 4h22v17H1z" fill="#aaa" /><path d="M8 21L19 3" stroke="#fff" strokeWidth="6" /><path d="M8 21L19 3" stroke="#666" strokeWidth="3" /></g>,
  reload: <g fill="none" stroke="#4377b1" strokeWidth="4"><path d="M3 10c2-8 12-9 17-3M21 14c-2 8-12 9-17 3" /><path d="M22 1v9h-8zM2 23v-9h8z" fill="#4377b1" stroke="none" /></g>,
  addRow: <g><path d="M1 3h20v16H1z" fill="#bbb" stroke="#888" /><path d="M2 8h18M2 13h18" stroke="#fff" strokeWidth="1.500" /><Mark d="M19 16v6M16 19h6" /></g>,
  addCol: <g><path d="M3 2h17v20H3z" fill="#bbb" stroke="#888" /><path d="M8 2v20M14 2v20" stroke="#fff" strokeWidth="1.500" /><Mark d="M19 16v6M16 19h6" /></g>,
  delCol: <g><path d="M3 2h17v20H3z" fill="#bbb" stroke="#888" /><path d="M8 2v20M14 2v20" stroke="#fff" strokeWidth="1.500" /><Mark d="M17 17l4 4M21 17l-4 4" /></g>,
  expr: <g><path d="M11 10h13v12H11z" fill={Y} stroke={G} /><text x="0" y="15" fontSize="27" fontWeight="700" fontFamily="Liberation Serif, serif" fill="#444">ε</text></g>,
  selectAll: <g><rect x="1" y="2" width="22" height="20" fill={Y} stroke={G} /><path d="M2 12h20" stroke="#8d6e1c" strokeWidth="2" strokeDasharray="2 2" /><path d="M2 8h20M2 16h20" stroke="#fff" /></g>,
  invert: <g><path d="M2 2v20h20z" fill={Y} stroke={G} /><path d="M2 2h20v20z" fill="#eee" stroke="#888" /></g>,
  unselect: <g><Pair x={1} y={2} /><circle cx="18" cy="18" r="5" fill="#fff" stroke="#d9252b" strokeWidth="2.500" /><path d="M14 21l7-7" stroke="#d9252b" strokeWidth="2" /></g>,
  moveTop: <g><path d="M1 2h22v20H1z" fill="#ddd" stroke="#666" strokeWidth="1.500" /><path d="M1 17h22M1 12h22" stroke="#888" /><path d="M12 4l6 6h-4v8h4v3H6v-3h4v-8H6z" fill={B} stroke={N} /></g>,
  fieldEdit: <g><path d="M1 3h18v18H1z" fill="#cfd4da" stroke="#555" /><path d="M1 9h18M1 15h18M7 3v18" stroke="#555" /><path d="M8 20L19 4" stroke="#8a2a1e" strokeWidth="5" /><path d="M9 19L19 5" stroke="#ed6b2e" strokeWidth="3" /></g>,
  search: <g fill="none" stroke="#888" strokeWidth="2.500"><circle cx="9" cy="9" r="7" /><path d="M14 14l8 8" strokeWidth="3.500" /></g>,
  mouse: <g fill="none" stroke="#333" strokeWidth="2"><path d="M3 4c5-5 8 1 10 5M2 8c4 6 7 7 9 8M7 3c0 6 2 8 5 9M3 12L11 2M22 3L12 11" /><ellipse cx="15" cy="16" rx="6" ry="7" transform="rotate(-35 15 16)" fill="#ddd" /><path d="M11 14l7-5M14 18a3 3 0 1 0 4-3" /></g>,
  lock: <g><path d="M6 11V7a6 6 0 0 1 12 0v4" fill="none" stroke="#888" strokeWidth="2.500" /><rect x="3" y="11" width="18" height="12" rx="2" fill={K} /></g>,
  crs: <g><path d="M1 12L12 1l11 11-11 11z" fill="#aaa" stroke="#777" strokeWidth="1.500" /><g fill="none" stroke="#555"><circle cx="12" cy="12" r="8" fill="#bbb" /><path d="M1 12h22M5 8h14M5 16h14M12 1v22" /><ellipse cx="12" cy="12" rx="4" ry="8" /></g></g>,
};

const GlyphSvg = styled.svg`
  overflow: visible;
`;

const Icon = ({ name, size = 24 }) => (
  <GlyphSvg viewBox="0 0 24 24" width={size} height={size} fill="none" aria-hidden="true">
    {glyphs[name]}
  </GlyphSvg>
);

const Caret = ({ dir = "down", w = 8, c = "#555f55" }) => (
  <svg width={w} height={w} viewBox="0 0 8 8" aria-hidden="true">
    <path
      d={{ down: "M0 2h8L4 6.500z", up: "M0 6h8L4 1.500z", left: "M6 0v8L1.500 4z" }[dir]}
      fill={c}
    />
  </svg>
);

/* ---------- data ---------- */

// "name*" is disabled, "name+" carries a drop-down arrow, "|" is a rule, "::" a grip
const fileTools = ":12 newdoc open save layout manager style :: identify abacus gear sigma table+ measure+ tip action*+ :: hand panSel zoomIn zoomOut zoomFull zoomSel zoomLayer zoomNative* zoomLast zoomNext* mapView map3d bookmark >>end";
const layerTools = ":12 source geopackage newVector newFeather newChip newMesh newMesh2 :: edits* pencil saveEdits* line*+ addPoly* vertex*+ modify* trash* cut* copy paste* undo* redo* :: label diagram | labelPin labelRed | labelGrey* >> :: python :: help";
const shapeTools = ":12 ruler* blobMove*+ blobRotate* blobScale* simplify* addRing* addPart* fillRing* delRing* delPart* reshape* offset* reverse* trim* split* split* merge* attrs* rotate*+ :: select!+ selectForm+ deselect+ selectLoc :: magnet snap* dots*! >>gap :12";
const tableTools = "pencil multiEdit* saveEdits* reload | addRow* trash* cut* copy paste* | expr selectAll invert unselect funnel moveTop panTo zoomSel | addCol* delCol* fieldEdit";
const panelTools = "brush group eye filter epsilon+ expand collapse remove";
const sideTools = ["addVector", "addRaster", "addMesh", "addComma", "addFeather", "addMesh2", "postgis+", "wms", "wcs", "wfs", "newChip+"];

const menus = ["Pro_ject", "_Edit", "_View", "_Layer", "_Settings", "_Plugins", "Vect_or", "_Raster", "_Web", "_Mesh", "Pro_cessing", "_Help"];

const columns = ["GID_1", "GID_0", "COUNTRY", "NAME_1", "VARNAME_1"];
const states = [
  ["51", "Wyoming", "WY|Wyo."],
  ["49", "West Virginia", "WV|W.Va."],
  ["50", "Wisconsin", "WI|Wis."],
  ["48", "Washington", "WA|Wash."],
  ["46", "Vermont", "VT"],
  ["47", "Virginia", "VA"],
  ["45", "Utah", "UT"],
  ["44", "Texas", "TX|Tex."],
  ["43", "Tennessee", "TN|Tenn."],
  ["40", "Rhode Island", "State of Rhod..."],
  ["42", "South Dakota", "SD|S.D."],
  ["41", "South Carolina", "SC|S.C."],
  ["38", "Oregon", "OR|Ore."],
  ["37", "Oklahoma", "OK|Okla."],
  ["36", "Ohio", "OH|Ohio"],
  ["33", "New York", "NY|N.Y."],
  ["29", "Nevada", "NV|Nev."],
  ["32", "New Mexico", "NM|N.M."],
  ["31", "New Jersey", "NJ|N.J."],
  ["30", "New Hampshire", "NH|N.H."],
  ["28", "Nebraska", "NE|Nebr."],
];

const Tools = ({ items, width, size = 24 }) =>
  items.split(" ").map((item, i) => {
    if (item === ":12") return <Grip key={i} $w={12} />;
    if (item === "::") return <Grip key={i} />;
    if (item === "|") return <Rule key={i} $h={width ? 12 : 20} />;
    if (item.startsWith(">>"))
      return (
        <More
          key={i}
          type="button"
          $push={item === ">>end"}
          $gap={item === ">>gap"}
          aria-label="More tools"
        >
          »
        </More>
      );
    const name = item.replace(/[*+!]/g, "");
    const off = item.includes("*");
    const pressed = item.includes("!");
    return (
      <React.Fragment key={i}>
        <ToolBtn type="button" aria-label={name} disabled={off} $w={width} $pressed={pressed}>
          <Icon name={name} size={size} />
        </ToolBtn>
        {item.includes("+") && (
          <ArrowBtn type="button" aria-label={`${name} options`} disabled={off} $pressed={pressed}>
            <Caret />
          </ArrowBtn>
        )}
      </React.Fragment>
    );
  });

const land =
  "M85 32H970L975 30 977 18 985 20 990 40 1025 45 1032 42 1045 45 1052 50 1062 49 1070 55 1095 55 1105 60 1135 65 1155 62 1190 57 1220 62 1305 97 1317 112 1330 115 1335 127 1350 130 1383 150 1390 175 1395 205 1385 235 1365 248 1363 262 1385 268 1415 252 1480 240 1498 230 1493 208 1570 204 1595 182 1625 162 1740 158 1757 150 1775 130 1785 108 1807 85 1817 90 1850 88 1857 98 1859 130 1865 150 1875 153 1883 165 1870 175 1850 178 1845 190 1830 185 1820 194 1785 198 1767 220 1760 225 1765 245 1773 262 1778 268 1788 258 1788 275 1770 278 1762 270 1745 276 1725 282 1690 290 1657 302 1655 325 1635 355 1620 345 1625 375 1600 412 1593 420 1600 450 1610 465 1585 490 1555 498 1530 520 1505 520 1490 545 1440 572 1420 620 1425 650 1442 690 1463 745 1460 780 1443 805 1425 790 1415 770 1400 755 1390 740 1375 715 1380 700 1377 685 1355 655 1340 645 1320 642 1310 655 1300 655 1275 638 1235 632 1210 638 1200 632 1165 635 1150 640 1165 665 1168 678 1150 668 1140 668 1120 675 1095 660 1070 658 1060 652 1025 653 1000 655 985 665 975 672 945 690 930 690 912 706 903 720 900 750 908 765 908 778 880 772 850 760 847 740 835 725 815 700 800 680 790 670 770 652 735 652 727 670 715 678 680 662 670 650 660 625 640 610 605 585 555 588 553 602H460L342 565 345 558 268 563 262 545 255 540 240 525 225 522 215 515 190 508 175 500 155 498 150 480 130 460 110 430 112 415 100 400 92 403 75 385 65 365 50 350 47 330 32 310 38 285 38 262 28 235 30 220 38 200 42 160 47 130 40 110 44 95 40 90 30 70 20 55 60 62 82 62 90 72 80 90 95 85 98 68 92 50 70 42z";

const borders =
  "M45 122L75 125 90 142 110 138 160 140 200 130 272 128M268 32V128L285 140 275 160 265 178 270 190V258M35 258H460M298 32L300 65 312 82 350 108 348 135 362 140 370 155 385 165 400 180 420 178 460 172M460 160V290M460 160H688M688 32V290M460 290H752V418M688 130H928M688 227H865L880 233 905 230 930 237M910 32L913 60 918 75 922 110 930 130 925 150 933 155V210L930 237 945 258 955 300 972 322 992 350V435L997 475 997 525M752 322H975M172 258V355L345 485 358 505 346 525 350 550 342 560M365 420V448L345 450V485M365 420H992M526 290V602M720 420V580H605M720 436H820V497L840 508 870 515 885 513 900 522 950 520 970 524 985 520 1012 530V548L1013 580 1027 605 1020 652M933 210H1102M955 302H1090M992 436H1137L1130 452 1148 452M1012 548H1103M1067 110V128L1050 135 1055 165 1080 182 1100 195 1105 225 1125 242 1137 260 1115 280 1095 305 1105 335 1130 350 1128 370 1145 390 1160 415 1155 432 1140 460 1135 490 1105 530 1110 570 1090 612H1150L1155 640M1150 75L1130 110 1165 122 1215 135 1220 157 1240 147 1260 152 1237 190 1235 242M1125 242H1235L1222 266V340L1207 390 1192 395 1190 412 1160 416M1222 266H1363M1310 266V350L1295 360 1275 385 1245 385 1207 392M1310 350L1330 355 1355 370 1380 372 1400 355 1425 340 1440 325 1447 305V258M1447 331H1607L1620 325 1635 320 1623 305 1627 283 1635 278 1617 258H1475L1470 250M1447 258L1498 235M1380 372L1390 390 1403 405 1380 420 1350 432M1403 405L1425 412 1452 405 1475 370 1500 358 1520 345 1510 335 1485 345 1482 332M1520 345L1550 355 1565 365 1555 375 1580 390M1160 436L1200 436 1205 432H1600M1412 435L1400 448 1375 460 1350 468 1325 484M1135 485H1365L1380 478H1433L1440 490H1475L1507 518M1203 485L1192 560V632M1285 485L1303 570V613H1220L1225 632M1303 622L1395 630 1400 620 1417 620M1357 490L1395 530 1432 572M1680 160V180L1682 235 1675 257V285L1655 295 1635 283M1740 155L1735 180 1720 195 1705 233M1753 152L1757 220M1680 236H1750L1760 232M1677 257H1740L1745 275M1730 257V279M1602 331L1605 375H1620";

const UsaMap = () => (
  <svg viewBox="311 171 704 528" role="img" aria-label="Map of the United States">
    <g transform="translate(345 355) scale(.33333)" stroke="#2e2f2b" strokeWidth="3" strokeLinejoin="round">
      <path d={land} fill="#91522d" />
      <path d={borders} fill="none" />
      <path d="M365 258H460V290H526V419H365z" fill="#2cf80d" />
      <path d="M1660 300l20-12 45-5-20 12-40 8z" fill="#91522d" />
      <path d="M1578 345l10 10 3 30 8 15-6 15-6-25-8-20z" fill="#fff" stroke="#555" strokeWidth="2" />
      <path d="M1580 352l-6 8 12 12-10 4 12 10-6 12M1560 365l15 10M1555 380l25 12M1560 405l24 8M1570 445l30 12M1560 470l30 10M1572 480l30 -12" fill="none" strokeWidth="4" />
      <path d="M75 38l12 8-6 8 14 8-12 8 10 12-18 4M95 400l5-14 18-3M100 390l10 12" fill="none" strokeWidth="4" />
      <path d="M895 725l8 20 6 25M905 715l20-18 25-12M1115 672l30-6M1140 655l15-10 8 14-14 8 18 10M1375 712l12 10-4 10 14 20 12 14" fill="none" strokeWidth="5" />
      <path d="M160 516l28 2M188 540h4M205 533l18 3M218 546l4 5M1370 820h5M1395 822l20-3 12-5M1820 192l8-8 6 8 12-4" fill="none" strokeWidth="6" strokeDasharray="9 3" />
      <path d="M1438 570l-15 20-4 20M1424 650l16 35 8 30M1432 800l12 8 8-6" fill="none" strokeWidth="4" />
    </g>
  </svg>
);

const SpinBox = ({ id, width, value }) => (
  <Field $w={width} $short>
    <input id={id} defaultValue={value} />
    <Spin>
      <button type="button" aria-label={`${id} up`}><Caret dir="up" w={7} /></button>
      <button type="button" aria-label={`${id} down`}><Caret w={7} /></button>
    </Spin>
  </Field>
);

const Minimize = () => <svg width="11" height="11"><path d="M0 5.500h11" stroke="#888" /></svg>;

const App = () => {
  const [visible, setVisible] = useState(true);
  const [render, setRender] = useState(true);
  const [selected, setSelected] = useState(6);

  return (
    <Desktop>
      <GlobalStyle />
      <MainWindow>
        <TitleBar>
          <Icon name="logo" size={18} />
          <h1>*Untitled Project — QGIS</h1>
          <WindowBtn type="button" aria-label="Minimize" $w={68}><Minimize /></WindowBtn>
          <WindowBtn type="button" aria-label="Maximize" $w={22}>
            <svg width="11" height="11"><path d="M.5.5h10v10H.5z" fill="none" stroke="#888" /></svg>
          </WindowBtn>
        </TitleBar>
        <MenuBar>
          {menus.map((menu) => {
            const [before, after] = menu.split("_");
            return (
              <a href="#menu" key={menu}>
                {before}<u>{after[0]}</u>{after.slice(1)}
              </a>
            );
          })}
        </MenuBar>
        <ToolRow><Tools items={fileTools} /></ToolRow>
        <ToolRow><Tools items={layerTools} /></ToolRow>
        <ToolRow><Tools items={shapeTools} /></ToolRow>

        <Workspace>
          <SideBar>
            <SideGrip />
            {sideTools.map((item) => (
              <SideItem key={item}>
                <Tools items={item} />
              </SideItem>
            ))}
          </SideBar>
          <LayersPanel>
            <PanelHead>
              <h2>Layers</h2>
              <PanelBtn type="button" aria-label="Undock"><Icon name="dock" size={12} /></PanelBtn>
              <PanelBtn type="button" aria-label="Close"><Icon name="close" size={12} /></PanelBtn>
            </PanelHead>
            <PanelTools><Tools items={panelTools} width={25} size={16} /></PanelTools>
            <LayerTree>
              <LayerRow>
                <Check id="layer" type="checkbox" checked={visible} onChange={() => setVisible(!visible)} />
                <Swatch />
                <label htmlFor="layer">gadm41_USA_1</label>
              </LayerRow>
            </LayerTree>
          </LayersPanel>
          <Splitter />
          <Canvas>{visible && <UsaMap />}</Canvas>
        </Workspace>

        <StatusBar>
          <Field $w={244}>
            <LocatorIcon><Icon name="search" size={13} /></LocatorIcon>
            <input aria-label="Locate" placeholder="Type to locate (Ctrl+K)" />
          </Field>
          <Count>1</Count>
          <Clipped htmlFor="coordinate" $w={42} $left={0} $right={3}>Coordinate</Clipped>
          <Field $w={103}><input id="coordinate" defaultValue="40.43°,-76.03°" /></Field>
          <MouseBtn type="button" aria-label="Toggle extents"><Icon name="mouse" size={17} /></MouseBtn>
          <Clipped htmlFor="scale" $w={13} $left={0} $right={1}>Scale</Clipped>
          <Field $w={84} $tight>
            <select id="scale"><option>1:20569344</option></select>
            <DropMark><Caret /></DropMark>
          </Field>
          <StatusIcon $left={10}><Icon name="lock" size={16} /></StatusIcon>
          <Clipped htmlFor="magnifier" $w={37} $left={6} $right={3}>Magnifier</Clipped>
          <SpinBox id="magnifier" width={88} value="100%" />
          <Clipped htmlFor="rotation" $w={30} $left={9} $right={8}>Rotation</Clipped>
          <SpinBox id="rotation" width={89} value="0.0 °" />
          <RenderLabel>
            <Check type="checkbox" checked={render} onChange={() => setRender(!render)} />
            Render
          </RenderLabel>
          <StatusIcon $left={16}><Icon name="crs" size={15} /></StatusIcon>
          <Crs>EPSG:4326</Crs>
        </StatusBar>
      </MainWindow>

      <AttributeWindow>
        <TitleBar $small>
          <Icon name="logo" size={18} />
          <h2>gadm41_USA_1 — Features Total: 51, Filtered: 51, Selected: 1</h2>
          <WindowBtn type="button" aria-label="Minimize table" $w={71}><Minimize /></WindowBtn>
        </TitleBar>
        <AttributeTools><Tools items={tableTools} width={25} size={16} /></AttributeTools>
        <TableArea>
          <Table>
            <thead>
              <tr>
                <HeadCell aria-label="Row" />
                {columns.map((c, i) => (
                  <HeadCell key={c}>
                    <SortLabel>
                      {c}
                      {i === 4 && <Caret c="#4d423b" />}
                    </SortLabel>
                  </HeadCell>
                ))}
              </tr>
            </thead>
            <tbody>
              {states.map(([id, name, variant], i) => (
                <Row key={id} $selected={i === selected} onClick={() => setSelected(i)}>
                  <RowNumber scope="row">{i + 1}</RowNumber>
                  <td>{`USA.${id}_1`}</td>
                  <td>USA</td>
                  <td>United States</td>
                  <td>{name}</td>
                  <td>{variant}</td>
                </Row>
              ))}
            </tbody>
          </Table>
        </TableArea>
        <ScrollBar>
          <button type="button" aria-label="Scroll left"><Caret dir="left" /></button>
          <Thumb />
        </ScrollBar>
        <FilterBar>
          <FilterBtn type="button">
            <Icon name="table" size={14} />
            Show All Features
            <Caret w={6} />
          </FilterBtn>
        </FilterBar>
        <Highlight />
        <Pointer viewBox="0 0 494 194" aria-hidden="true">
          <path d="M494 9L14 181" stroke="#ff0a0a" strokeWidth="2" />
          <path d="M4 185l10-12 5 15z" fill="#ff0a0a" />
        </Pointer>
      </AttributeWindow>
    </Desktop>
  );
};

export default App;
